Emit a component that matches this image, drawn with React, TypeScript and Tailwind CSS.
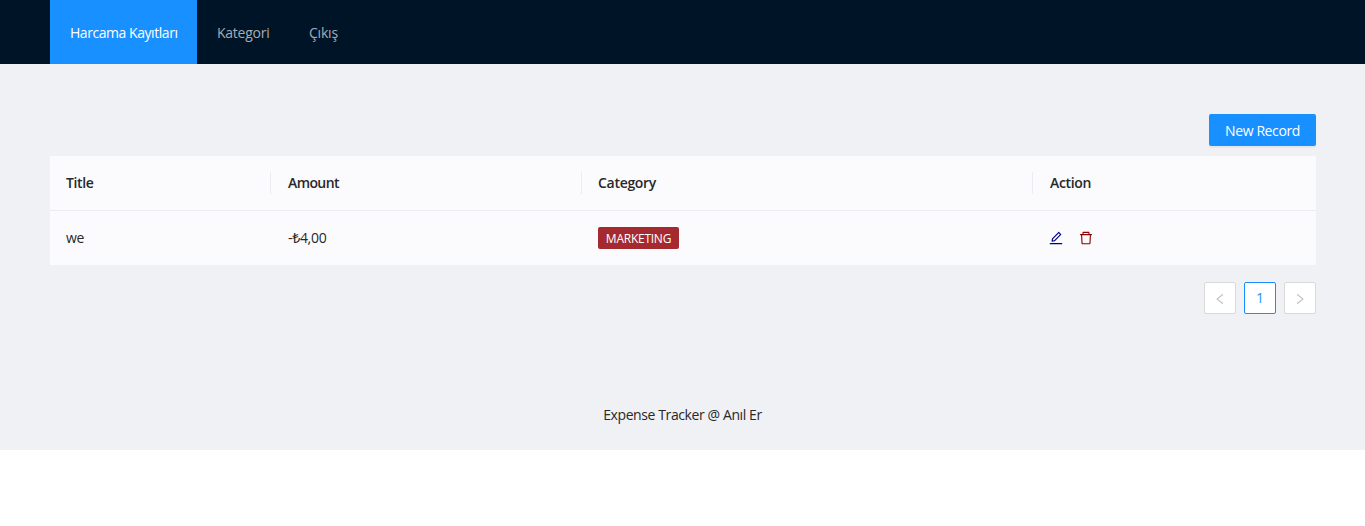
import { AiOutlineDelete, AiOutlineEdit, AiOutlineLeft, AiOutlineRight } from "react-icons/ai";

function NavBar() {
  return (
    <header className="flex h-16 bg-[#001428] pl-[50px] text-[14px] leading-[63px] text-[#a6adb4]">
      <a className="w-[147px] bg-[#1890ff] pt-px pl-5 text-white whitespace-nowrap">
        <span className="tracking-[-0.45px]">Harcama Kayıtları</span>
      </a>
      <a className="w-[92px] pt-px pl-5 tracking-[-0.25px]">Kategori</a>
      <a className="pt-px pl-5 tracking-[-0.2px]">Çıkış</a>
    </header>
  );
}

function RecordsTable() {
  return (
    <section className="mt-[10px] bg-[#fbfbfd]">
      <div className="grid h-[55px] grid-cols-[221px_311px_451px_1fr] items-center border-b border-[#ececf0] font-semibold">
        <div className="flex h-[22px] items-center border-r border-[#ececf0] pl-4 tracking-[-0.35px]">Title</div>
        <div className="flex h-[22px] items-center border-r border-[#ececf0] pl-[17px] tracking-[-0.6px]">Amount</div>
        <div className="flex h-[22px] items-center border-r border-[#ececf0] pl-4 tracking-[-0.3px]">Category</div>
        <div className="pl-[17px] tracking-[-0.35px]">Action</div>
      </div>
      <div className="grid h-[54px] grid-cols-[221px_311px_451px_1fr] items-center">
        <div className="pl-4 tracking-[-0.4px]">we</div>
        <div className="pl-[17px] tracking-[-0.3px]">-₺4,00</div>
        <div className="pl-4">
          <span className="flex h-[22px] w-[81px] items-center justify-center rounded-[2px] bg-[#a52a2f] pt-px text-[12px] tracking-[-0.25px] text-white">
            MARKETING
          </span>
        </div>
        <div className="flex gap-[14px] pl-[15px]">
          <AiOutlineEdit size={16} color="#00008b" />
          <AiOutlineDelete size={16} color="#8b0000" />
        </div>
      </div>
    </section>
  );
}

function Pagination() {
  return (
    <nav className="mt-[17px] flex justify-end gap-2">
      <button className="flex size-8 items-center justify-center rounded-[2px] border border-[#d9d9d9] bg-white text-[#bfbfbf]">
        <AiOutlineLeft size={14} className="translate-y-px" />
      </button>
      <button className="flex size-8 items-center justify-center rounded-[2px] border border-[#1890ff] bg-white text-[#1890ff]">
        1
      </button>
      <button className="flex size-8 items-center justify-center rounded-[2px] border border-[#d9d9d9] bg-white text-[#bfbfbf]">
        <AiOutlineRight size={14} className="translate-y-px" />
      </button>
    </nav>
  );
}

export default function App() {
  return (
    <div className="h-[526px] overflow-hidden bg-white font-['Open_Sans','Noto_Sans',sans-serif] text-[14px] leading-[22px] text-[#27282a]">
      <NavBar />
      <div className="flex h-[386px] flex-col bg-[#f0f1f4]">
        <main className="pt-[50px] pr-[49px] pl-[50px]">
          <div className="flex justify-end">
            <button className="h-8 w-[107px] rounded-[2px] bg-[#1890ff] pt-px tracking-[-0.4px] text-white shadow-[0_2px_0_rgba(0,0,0,0.04)]">
              New Record
            </button>
          </div>
          <RecordsTable />
          <Pagination />
        </main>
        <footer className="mt-[90px] text-center tracking-[-0.4px]">Expense Tracker @ Anıl Er</footer>
      </div>
    </div>
  );
}
